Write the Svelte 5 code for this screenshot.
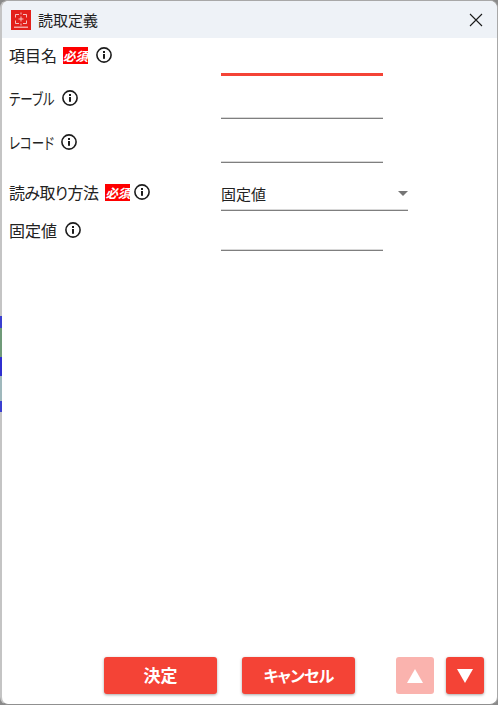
<script lang="ts">
	interface Field {
		label: string;
		required?: boolean;
		kind?: 'select';
		value?: string;
		rowClass: string;
		focused?: boolean;
		kana?: boolean;
	}

	const fields: Field[] = [
		{ label: '項目名', required: true, rowClass: 'row-name', focused: true },
		{ label: 'テーブル', rowClass: 'row-table', kana: true },
		{ label: 'レコード', rowClass: 'row-record', kana: true },
		{ label: '読み取り方法', required: true, kind: 'select', value: '固定値', rowClass: 'row-method' },
		{ label: '固定値', rowClass: 'row-fixed' }
	];

	// colours of the window behind, showing through the translucent edge
	const edge = [
		{ h: 12, c: '#3a3fd0' },
		{ h: 29, c: '#6f9a78' },
		{ h: 19, c: '#2f2fd0' },
		{ h: 25, c: '#9fb8bc' },
		{ h: 11, c: '#3a3fd0' }
	];
</script>

<div class="window">
	<header class="titlebar">
		<div class="logo" aria-hidden="true">
			<svg width="20" height="20" viewBox="0 0 20 20">
				<rect width="20" height="20" fill="#e3201b" />
				<g fill="none" stroke="#ffffff" stroke-width="0.8" opacity="0.9">
					<path d="M4.500 7.500V4.500H8M12 4.500h3.500v3M15.500 10.500v3H12M8 13.500H4.500v-3" />
					<path d="M10 6.500v5M7.500 9h5M10 2.500v2M10 13.500v2" />
				</g>
				<rect x="3" y="16.500" width="14" height="1.500" fill="#ffffff" opacity="0.6" />
			</svg>
		</div>
		<span class="title">読取定義</span>
		<button class="close" aria-label="閉じる">
			<svg width="14" height="14" viewBox="0 0 14 14">
				<path d="M1 1l12 12M13 1L1 13" stroke="#1a1a1a" stroke-width="1.1" fill="none" />
			</svg>
		</button>
	</header>

	<main class="form">
		{#each fields as f}
			<div class="row {f.rowClass}">
				<div class="label">
					{#if f.kana}
						<span class="label-box"><span class="label-text kana">{f.label}</span></span>
					{:else}
						<span class="label-text">{f.label}</span>
					{/if}
					{#if f.required}<span class="req">必須</span>{/if}
					<svg class="info" width="16" height="16" viewBox="0 0 16 16" aria-hidden="true">
						<circle cx="8" cy="8" r="7.100" fill="none" stroke="#1c1c1c" stroke-width="1.600" />
						<rect x="7" y="7" width="2" height="4.800" fill="#1c1c1c" />
						<rect x="7" y="4" width="2" height="2" fill="#1c1c1c" />
					</svg>
				</div>
				{#if f.kind === 'select'}
					<div class="select">
						<span>{f.value}</span>
						<i class="caret"></i>
					</div>
				{:else}
					<div class="input" class:focused={f.focused}></div>
				{/if}
			</div>
		{/each}
	</main>

	<footer class="actions">
		<button class="btn wide">決定</button>
		<button class="btn wide cancel">キャンセル</button>
		<button class="btn square up" aria-label="上へ">
			<svg width="16" height="14" viewBox="0 0 16 14"><path d="M8 0l8 14H0z" fill="#ffffff" /></svg>
		</button>
		<button class="btn square" aria-label="下へ">
			<svg width="16" height="14" viewBox="0 0 16 14"><path d="M0 0h16L8 14z" fill="#ffffff" /></svg>
		</button>
	</footer>

	<div class="edge" aria-hidden="true">
		{#each edge as s}
			<div style="height: {s.h}px; background: {s.c}"></div>
		{/each}
	</div>
</div>

<style>
	:global(body) {
		background: #8a8a8a;
		overflow: hidden;
	}

	.window {
		position: relative;
		box-sizing: border-box;
		width: 498px;
		height: 705px;
		display: flex;
		flex-direction: column;
		background: #ffffff;
		border: 1px solid #a8a8a8;
		border-left-width: 2px;
		border-left-color: #c4c4c4;
		border-bottom-color: #909090;
		border-radius: 8px;
		font-family: 'Noto Sans CJK JP', 'Liberation Sans', sans-serif;
		color: #222222;
	}

	.titlebar {
		height: 37px;
		flex: none;
		display: flex;
		align-items: center;
		padding: 0 14px 0 9px;
		background: #eef2f7;
		border-radius: 7px 7px 0 0;
	}

	.logo {
		width: 20px;
		height: 20px;
		margin-right: 7px;
	}
	.logo svg {
		display: block;
	}

	.title {
		font-size: 15px;
		margin-top: -1px;
		color: #1f1f1f;
	}

	.close {
		margin-left: auto;
		padding: 0;
		border: none;
		background: none;
		display: flex;
	}

	.form {
		flex: 1;
		display: flex;
		flex-direction: column;
		padding-left: 7px;
	}

	.row {
		display: grid;
		grid-template-columns: 212px auto;
		box-sizing: border-box;
	}
	.row-name {
		height: 38px;
		padding-top: 7px;
	}
	.row-table {
		height: 43px;
		padding-top: 12px;
	}
	.row-record {
		height: 44px;
		padding-top: 13px;
	}
	.row-method {
		height: 47px;
		padding-top: 19px;
	}
	.row-fixed {
		height: 41px;
		padding-top: 10px;
	}

	.label {
		display: flex;
		align-items: center;
		align-self: start;
		height: 20px;
		font-size: 16px;
		line-height: 20px;
	}

	.label-text {
		white-space: nowrap;
		margin-right: 7px;
	}
	.row-name .label-text {
		margin-right: 6px;
	}
	.row-fixed .label-text {
		margin-right: 8px;
	}
	.row-method .label-text {
		font-feature-settings: 'palt';
		letter-spacing: -0.600px;
	}

	/* kana in the original font are condensed, squeeze them to the same width */
	.label-box {
		width: 53px;
		flex: none;
	}
	.row-record .label-box {
		width: 52px;
	}
	.label-text.kana {
		display: inline-block;
		margin-right: 0;
		font-feature-settings: 'palt';
		transform: scaleX(0.78);
		transform-origin: left center;
	}

	.req {
		background: #fe0000;
		color: #ffffff;
		font-size: 12.500px;
		font-weight: 700;
		font-style: italic;
		line-height: 17px;
		height: 17px;
		width: 25px;
		white-space: nowrap;
		overflow: hidden;
	}
	.row-name .req {
		margin-right: 8px;
	}
	.row-method .req {
		margin-right: 4px;
	}

	.info {
		flex: none;
	}

	.input {
		width: 162px;
		align-self: end;
		height: 0;
		border-bottom: 1px solid #7f7f7f;
		box-shadow: 0 -1px 0 #d8d8d8;
		grid-column: 2;
	}
	.input.focused {
		border-bottom: 3px solid #f44336;
		box-shadow: none;
	}

	.select {
		width: 187px;
		box-sizing: border-box;
		height: 29px;
		align-self: end;
		display: flex;
		align-items: center;
		justify-content: space-between;
		font-size: 15px;
		padding-bottom: 5px;
		border-bottom: 1px solid #7f7f7f;
		box-shadow: inset 0 -1px 0 #d8d8d8;
	}

	.caret {
		width: 0;
		height: 0;
		border-left: 5px solid transparent;
		border-right: 5px solid transparent;
		border-top: 5px solid #757575;
	}

	.actions {
		flex: none;
		display: flex;
		align-items: center;
		height: 37px;
		padding: 0 13px 10px 0;
		justify-content: flex-end;
	}

	.btn {
		height: 37px;
		border: none;
		border-radius: 3px;
		background: #f44336;
		color: #ffffff;
		font-family: inherit;
		font-size: 17px;
		font-weight: 700;
		padding: 0 0 2px;
		box-shadow: 0 1px 3px rgba(0, 0, 0, 0.35);
		display: flex;
		align-items: center;
		justify-content: center;
	}
	.wide {
		width: 113px;
	}
	.cancel {
		margin-left: 25px;
		font-size: 16px;
		letter-spacing: -0.800px;
		font-feature-settings: 'palt';
	}
	.square {
		width: 38px;
		margin-left: 12px;
		padding: 0;
	}
	.up {
		margin-left: 41px;
		opacity: 0.4;
		box-shadow: none;
	}

	.edge {
		position: absolute;
		left: -2px;
		top: 315px;
		width: 2px;
	}
</style>
